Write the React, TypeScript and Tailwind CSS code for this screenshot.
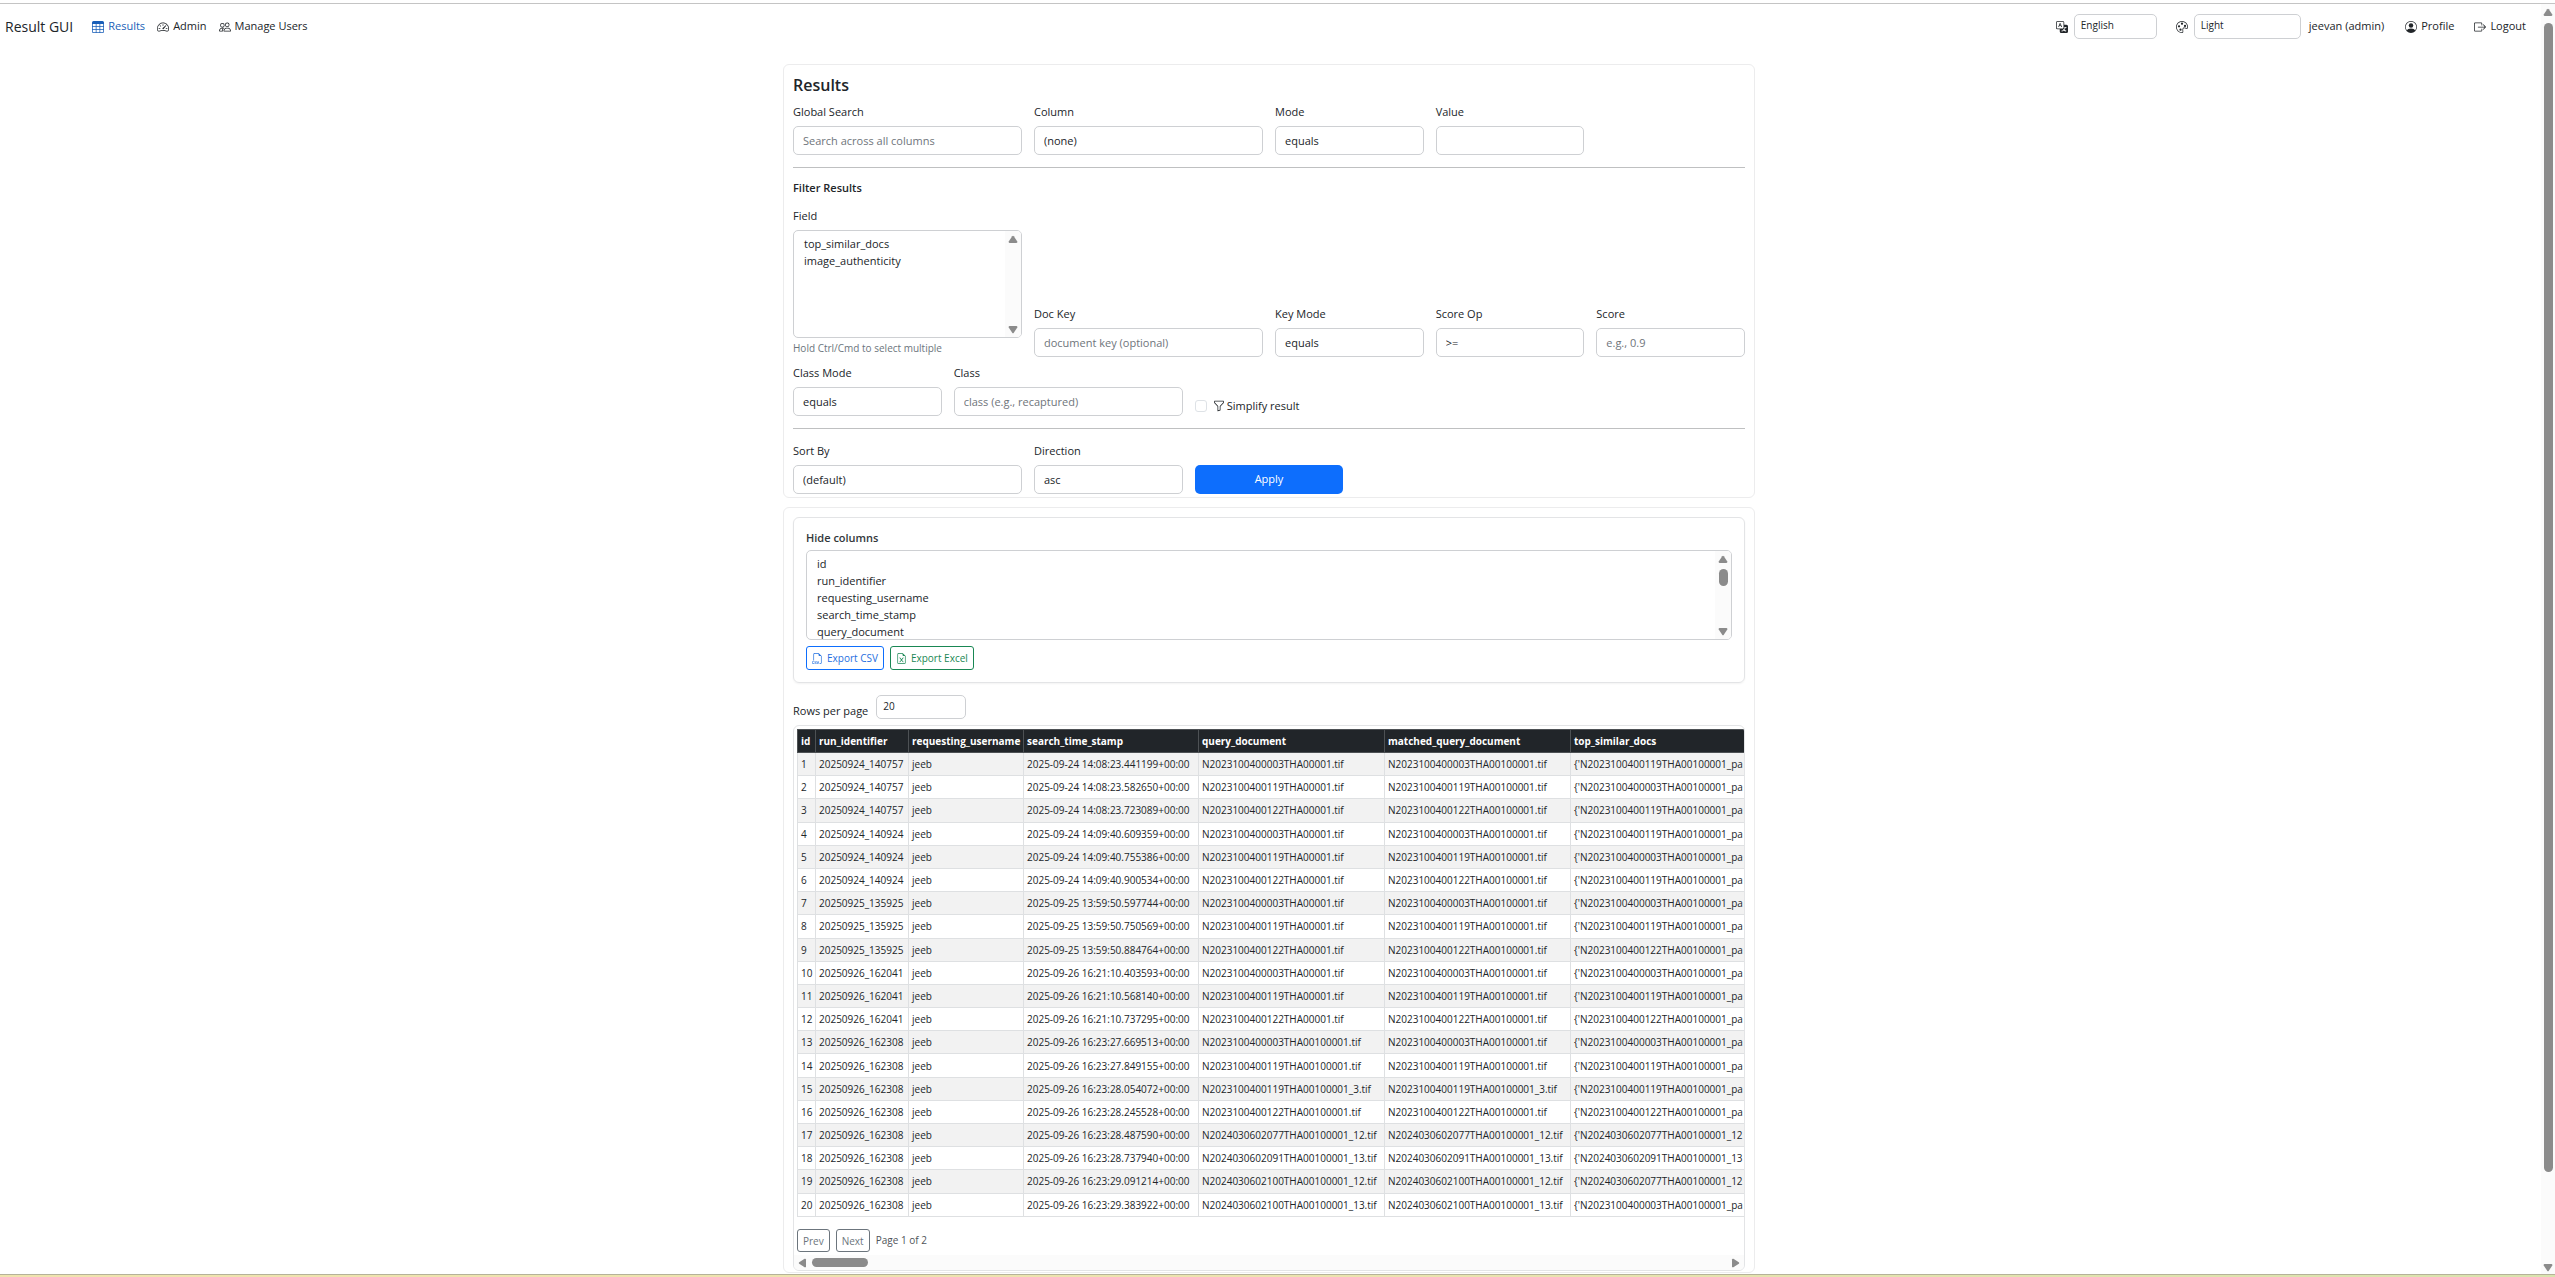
import type { ReactNode } from "react";
import {
  BsBoxArrowRight,
  BsFileEarmarkExcel,
  BsFiletypeCsv,
  BsFunnel,
  BsPalette,
  BsPeople,
  BsPersonCircle,
  BsSpeedometer2,
  BsTable,
  BsTranslate,
} from "react-icons/bs";

const control =
  "block h-[29px] w-full appearance-none rounded-[5px] border border-[#ced0d3] bg-white px-[9px] text-[11px] leading-5 text-[#212529] outline-none placeholder:text-[#6f757b]";
const smallControl =
  "block appearance-none rounded-[5px] border border-[#ced0d3] bg-white px-1.5 pb-0.5 text-[10px] text-[#212529] outline-none";

function Field({
  id,
  label,
  span,
  children,
}: {
  id: string;
  label: string;
  span: string;
  children?: ReactNode;
}) {
  return (
    <div className={span}>
      <label htmlFor={id} className="mb-1 block leading-5">
        {label}
      </label>
      {children}
    </div>
  );
}

function Choice({ id, value, options }: { id: string; value: string; options: string[] }) {
  return (
    <select id={id} defaultValue={value} className={control}>
      {options.map((o) => (
        <option key={o}>{o}</option>
      ))}
    </select>
  );
}

function Arrow({ dir }: { dir: "up" | "down" | "left" | "right" }) {
  const paths = {
    up: "M4.2 1.2 Q5 .2 5.8 1.2 L9.3 6.6 Q9.6 8 8.4 8 H1.6 Q.4 8 .7 6.6Z",
    down: "M4.2 8.8 Q5 9.8 5.8 8.8 L9.3 3.4 Q9.6 2 8.4 2 H1.6 Q.4 2 .7 3.4Z",
    left: "M1.2 4.2 Q.2 5 1.2 5.8 L6.6 9.3 Q8 9.6 8 8.4 V1.6 Q8 .4 6.6 .7Z",
    right: "M8.8 4.2 Q9.8 5 8.8 5.8 L3.4 9.3 Q2 9.6 2 8.4 V1.6 Q2 .4 3.4 .7Z",
  };
  return (
    <svg viewBox="0 0 10 10" className="size-[10px] shrink-0" fill="#8b8b8b" aria-hidden="true">
      <path d={paths[dir]} />
    </svg>
  );
}

function ListBox({
  id,
  options,
  height,
  thumb,
}: {
  id: string;
  options: string[];
  height: string;
  thumb?: boolean;
}) {
  return (
    <div className={`flex overflow-hidden rounded-[5px] border border-[#ced0d3] bg-white ${height}`}>
      <select
        id={id}
        multiple
        className="h-full min-w-0 flex-1 overflow-hidden pb-0 pl-2 pt-[5px] text-[11px] outline-none [scrollbar-width:none]"
      >
        {options.map((o) => (
          <option key={o} className="h-[17px] min-h-0 px-0.5 py-0 leading-[17px]">
            {o}
          </option>
        ))}
      </select>
      <div className="flex w-4 flex-col items-center bg-[#fbfbfb] pb-[3px] pt-1">
        <Arrow dir="up" />
        {thumb && <div className="mt-1 h-[17px] w-[9px] rounded-full bg-[#8b8b8b]" />}
        <div className="flex-1" />
        <Arrow dir="down" />
      </div>
    </div>
  );
}

const columns = [
  { name: "id", width: "w-[18px]" },
  { name: "run_identifier", width: "w-[93px]" },
  { name: "requesting_username", width: "w-[115px]" },
  { name: "search_time_stamp", width: "w-[175px]" },
  { name: "query_document", width: "w-[186px]" },
  { name: "matched_query_document", width: "w-[186px]" },
  { name: "top_similar_docs", width: "w-[400px]" },
];

const rows: [string, string, string, string, string][] = [
  ["20250924_140757", "2025-09-24 14:08:23.441199+00:00", "N2023100400003THA00001", "N2023100400003THA00100001", "N2023100400119THA00100001_pa"],
  ["20250924_140757", "2025-09-24 14:08:23.582650+00:00", "N2023100400119THA00001", "N2023100400119THA00100001", "N2023100400003THA00100001_pa"],
  ["20250924_140757", "2025-09-24 14:08:23.723089+00:00", "N2023100400122THA00001", "N2023100400122THA00100001", "N2023100400119THA00100001_pa"],
  ["20250924_140924", "2025-09-24 14:09:40.609359+00:00", "N2023100400003THA00001", "N2023100400003THA00100001", "N2023100400119THA00100001_pa"],
  ["20250924_140924", "2025-09-24 14:09:40.755386+00:00", "N2023100400119THA00001", "N2023100400119THA00100001", "N2023100400003THA00100001_pa"],
  ["20250924_140924", "2025-09-24 14:09:40.900534+00:00", "N2023100400122THA00001", "N2023100400122THA00100001", "N2023100400119THA00100001_pa"],
  ["20250925_135925", "2025-09-25 13:59:50.597744+00:00", "N2023100400003THA00001", "N2023100400003THA00100001", "N2023100400003THA00100001_pa"],
  ["20250925_135925", "2025-09-25 13:59:50.750569+00:00", "N2023100400119THA00001", "N2023100400119THA00100001", "N2023100400119THA00100001_pa"],
  ["20250925_135925", "2025-09-25 13:59:50.884764+00:00", "N2023100400122THA00001", "N2023100400122THA00100001", "N2023100400122THA00100001_pa"],
  ["20250926_162041", "2025-09-26 16:21:10.403593+00:00", "N2023100400003THA00001", "N2023100400003THA00100001", "N2023100400003THA00100001_pa"],
  ["20250926_162041", "2025-09-26 16:21:10.568140+00:00", "N2023100400119THA00001", "N2023100400119THA00100001", "N2023100400119THA00100001_pa"],
  ["20250926_162041", "2025-09-26 16:21:10.737295+00:00", "N2023100400122THA00001", "N2023100400122THA00100001", "N2023100400122THA00100001_pa"],
  ["20250926_162308", "2025-09-26 16:23:27.669513+00:00", "N2023100400003THA00100001", "N2023100400003THA00100001", "N2023100400003THA00100001_pa"],
  ["20250926_162308", "2025-09-26 16:23:27.849155+00:00", "N2023100400119THA00100001", "N2023100400119THA00100001", "N2023100400119THA00100001_pa"],
  ["20250926_162308", "2025-09-26 16:23:28.054072+00:00", "N2023100400119THA00100001_3", "N2023100400119THA00100001_3", "N2023100400119THA00100001_pa"],
  ["20250926_162308", "2025-09-26 16:23:28.245528+00:00", "N2023100400122THA00100001", "N2023100400122THA00100001", "N2023100400122THA00100001_pa"],
  ["20250926_162308", "2025-09-26 16:23:28.487590+00:00", "N2024030602077THA00100001_12", "N2024030602077THA00100001_12", "N2024030602077THA00100001_12"],
  ["20250926_162308", "2025-09-26 16:23:28.737940+00:00", "N2024030602091THA00100001_13", "N2024030602091THA00100001_13", "N2024030602091THA00100001_13"],
  ["20250926_162308", "2025-09-26 16:23:29.091214+00:00", "N2024030602100THA00100001_12", "N2024030602100THA00100001_12", "N2024030602077THA00100001_12"],
  ["20250926_162308", "2025-09-26 16:23:29.383922+00:00", "N2024030602100THA00100001_13", "N2024030602100THA00100001_13", "N2023100400003THA00100001_pa"],
];

const pageButton =
  "h-[23px] rounded-[3px] border border-[#6c757d] px-[5px] text-[10px] leading-4 text-[#6c757d]";

function NavBar() {
  const link = "flex items-center gap-1";
  return (
    <nav className="flex h-[25px] items-center pl-[5px] pr-3">
      <a href="#home" className="mr-[19px] text-[14px]">
        Result GUI
      </a>
      <div className="flex items-center gap-3">
        <a href="#results" className={`${link} text-[#1a5fb8]`}>
          <BsTable className="size-3" />
          Results
        </a>
        <a href="#admin" className={link}>
          <BsSpeedometer2 className="size-3" />
          Admin
        </a>
        <a href="#users" className={link}>
          <BsPeople className="size-3" />
          Manage Users
        </a>
      </div>
      <div className="ml-auto flex items-center">
        <label htmlFor="language" aria-label="Language">
          <BsTranslate className="size-3" />
        </label>
        <select id="language" className={`ml-1.5 h-[25px] w-[83px] ${smallControl}`}>
          <option>English</option>
        </select>
        <label htmlFor="theme" aria-label="Theme" className="ml-[19px]">
          <BsPalette className="size-3" />
        </label>
        <select id="theme" className={`ml-1.5 h-[25px] w-[107px] ${smallControl}`}>
          <option>Light</option>
          <option>Dark</option>
        </select>
        <span className="ml-2">jeevan (admin)</span>
        <a href="#profile" className={`${link} ml-[21px]`}>
          <BsPersonCircle className="size-3" />
          Profile
        </a>
        <a href="#logout" className={`${link} ml-5`}>
          <BsBoxArrowRight className="size-3" />
          Logout
        </a>
      </div>
    </nav>
  );
}

function FilterCard() {
  const row = "grid grid-cols-12 items-end gap-x-3";
  return (
    <section className="rounded-[6px] border border-[#ececed] px-[9px] pb-[3px] pt-2">
      <h1 className="mb-[5px] text-[16px] font-semibold leading-6">Results</h1>
      <div className={row}>
        <Field id="search" label="Global Search" span="col-span-3">
          <input id="search" placeholder="Search across all columns" className={control} />
        </Field>
        <Field id="column" label="Column" span="col-span-3">
          <Choice id="column" value="(none)" options={["(none)"]} />
        </Field>
        <Field id="mode" label="Mode" span="col-span-2">
          <Choice id="mode" value="equals" options={["equals", "contains"]} />
        </Field>
        <Field id="value" label="Value" span="col-span-2">
          <input id="value" className={control} />
        </Field>
      </div>
      <hr className="mt-3 border-[#bfc0c1]" />
      <h2 className="mb-2 mt-2.5 font-semibold leading-5">Filter Results</h2>
      <div className={row}>
        <Field id="field" label="Field" span="col-span-3">
          <ListBox id="field" height="h-[108px]" options={["top_similar_docs", "image_authenticity"]} />
          <p className="mt-0.5 text-[10px] leading-[17px] text-[#6c757d]">Hold Ctrl/Cmd to select multiple</p>
        </Field>
        <Field id="dockey" label="Doc Key" span="col-span-3">
          <input id="dockey" placeholder="document key (optional)" className={control} />
        </Field>
        <Field id="keymode" label="Key Mode" span="col-span-2">
          <Choice id="keymode" value="equals" options={["equals", "contains"]} />
        </Field>
        <Field id="scoreop" label="Score Op" span="col-span-2">
          <Choice id="scoreop" value=">=" options={[">=", "<="]} />
        </Field>
        <Field id="score" label="Score" span="col-span-2">
          <input id="score" placeholder="e.g., 0.9" className={control} />
        </Field>
      </div>
      <div className={`${row} mt-1.5`}>
        <Field id="classmode" label="Class Mode" span="col-span-2">
          <Choice id="classmode" value="equals" options={["equals", "contains"]} />
        </Field>
        <Field id="class" label="Class" span="col-span-3">
          <input id="class" placeholder="class (e.g., recaptured)" className={control} />
        </Field>
        <div className="col-span-3 flex items-center">
          <input
            id="simplify"
            type="checkbox"
            className="size-3 appearance-none rounded-[3px] border border-[#dee2e6] bg-white"
          />
          <label htmlFor="simplify" className="ml-1.5 flex items-center gap-0.5 leading-5">
            <BsFunnel className="size-3" />
            Simplify result
          </label>
        </div>
      </div>
      <hr className="mt-3 border-[#bfc0c1]" />
      <div className={`${row} mt-3`}>
        <Field id="sort" label="Sort By" span="col-span-3">
          <Choice id="sort" value="(default)" options={["(default)"]} />
        </Field>
        <Field id="direction" label="Direction" span="col-span-2">
          <Choice id="direction" value="asc" options={["asc", "desc"]} />
        </Field>
        <button type="button" className="col-span-2 h-[29px] rounded-[5px] bg-[#0d6efd] font-medium text-white">
          Apply
        </button>
      </div>
    </section>
  );
}

function ResultsTable() {
  return (
    <table className="h-[488px] w-[1173px] table-fixed border-collapse whitespace-nowrap text-[10px] leading-4">
      <colgroup>
        {columns.map((c) => (
          <col key={c.name} className={c.width} />
        ))}
      </colgroup>
      <thead>
        <tr className="h-[23px] bg-[#212529] text-left text-white">
          {columns.map((c) => (
            <th key={c.name} className="border border-[#4d5154] px-[3px] py-0 font-bold">
              {c.name}
            </th>
          ))}
        </tr>
      </thead>
      <tbody>
        {rows.map(([run, time, query, matched, similar], i) => (
          <tr key={time} className="odd:bg-[#f2f2f2]">
            {[String(i + 1), run, "jeeb", time, `${query}.tif`, `${matched}.tif`, `{'${similar}`].map(
              (text, j) => (
                <td key={j} className="border border-[#dee0e2] px-[3px] py-0">
                  {text}
                </td>
              ),
            )}
          </tr>
        ))}
      </tbody>
    </table>
  );
}

function ResultsCard() {
  return (
    <section className="mt-[9px] rounded-[6px] border border-[#ececed] px-[9px] pb-px pt-[9px]">
      <div className="rounded-[6px] border border-[#e3e4e6] px-3 pb-3 pt-2.5 shadow-xs">
        <label htmlFor="hide" className="mb-0.5 block font-semibold leading-5 text-[#33373b]">
          Hide columns
        </label>
        <ListBox
          id="hide"
          height="h-[90px]"
          thumb
          options={["id", "run_identifier", "requesting_username", "search_time_stamp", "query_document"]}
        />
        <div className="mt-1.5 flex gap-1.5 text-[10px]">
          <button
            type="button"
            className="flex h-6 items-center gap-1 rounded-[3px] border border-[#0d6efd] px-[5px] text-[#1f6fe0]"
          >
            <BsFiletypeCsv className="size-[11px]" />
            Export CSV
          </button>
          <button
            type="button"
            className="flex h-6 items-center gap-1 rounded-[3px] border border-[#198754] px-[5px] text-[#198754]"
          >
            <BsFileEarmarkExcel className="size-[11px]" />
            Export Excel
          </button>
        </div>
      </div>
      <div className="mt-3 flex items-start gap-2">
        <label htmlFor="perpage" className="mt-1.5 leading-5">
          Rows per page
        </label>
        <select id="perpage" className={`h-6 w-[90px] ${smallControl}`}>
          <option>20</option>
          <option>50</option>
        </select>
      </div>
      <div className="mt-1 overflow-hidden rounded-[6px] border border-[#e3e4e6]">
        <div className="overflow-hidden pl-[3px] pt-[3px]">
          <ResultsTable />
          <div className="mt-3 flex items-center gap-1.5 text-[10px]">
            <button type="button" className={pageButton}>
              Prev
            </button>
            <button type="button" className={pageButton}>
              Next
            </button>
            <span className="text-[#4f5459]">Page 1 of 2</span>
          </div>
        </div>
        <div className="mt-[3px] flex h-[15px] items-center bg-[#fbfbfb] px-1">
          <Arrow dir="left" />
          <div className="ml-1 h-[9px] w-14 rounded-full bg-[#8b8b8b]" />
          <div className="flex-1" />
          <Arrow dir="right" />
        </div>
      </div>
    </section>
  );
}

export default function App() {
  return (
    <div className="flex h-screen flex-col overflow-hidden bg-white font-['Open_Sans','Noto_Sans',sans-serif] text-[11px] text-[#212529]">
      <div className="h-1 shrink-0 border-b border-[#c4c4c4]" />
      <div className="flex min-h-0 flex-1">
        <div className="min-w-0 flex-1 overflow-hidden pr-[3px] pt-2.5">
          <NavBar />
          <main className="mx-auto mt-[25px] w-full max-w-[972px]">
            <FilterCard />
            <ResultsCard />
          </main>
        </div>
        <div className="flex w-[14px] flex-col items-center bg-[#fbfbfb] pb-0.5 pt-1">
          <Arrow dir="up" />
          <div className="mt-[5px] w-[9px] flex-[1150] rounded-full bg-[#8b8b8b]" />
          <div className="flex-[90]" />
          <Arrow dir="down" />
        </div>
      </div>
      <div className="h-[3px] shrink-0 border-t border-[#b5b299] bg-linear-to-r from-[#efe3ae] via-[#ece3ae] to-[#d9e3ae]" />
    </div>
  );
}
